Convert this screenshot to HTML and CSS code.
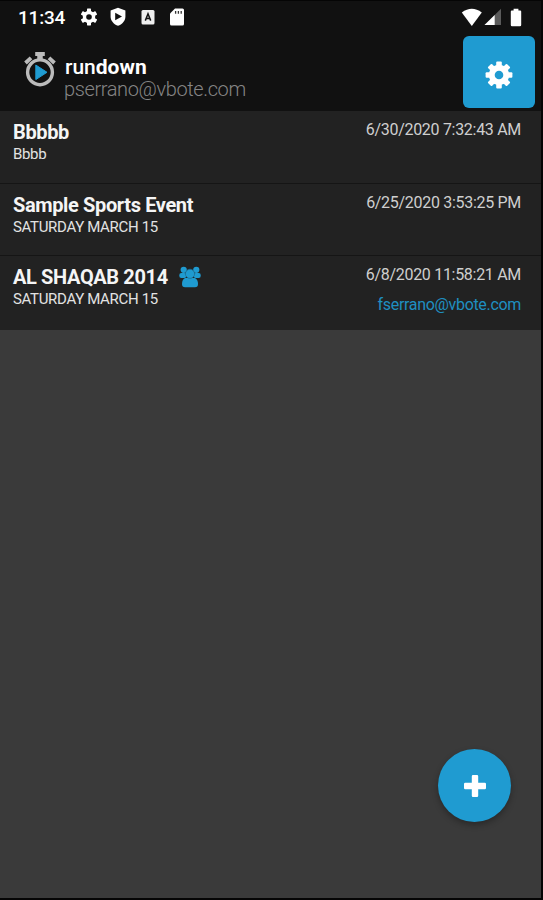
FILE: index.html
```html
<!DOCTYPE html>
<html lang="en">
<head>
<meta charset="utf-8">
<title>rundown</title>
<link rel="stylesheet" href="styles.css">
</head>
<body>
<div class="screen">
  <div class="status">
    <span class="clock">11:34</span>
    <svg class="s-gear" width="18" height="18" viewBox="-9 -9 18 18"><g fill="#fff"><rect x="-2" y="-8.4" width="4" height="16.8" rx=".6"/><rect x="-2" y="-8.4" width="4" height="16.8" rx=".6" transform="rotate(60)"/><rect x="-2" y="-8.4" width="4" height="16.8" rx=".6" transform="rotate(120)"/></g><circle r="4.5" fill="none" stroke="#fff" stroke-width="3.4"/><circle r="2.8" fill="#111"/></svg>
    <svg class="s-shield" width="18" height="20" viewBox="0 0 18 20"><path fill="#fff" d="M9 .8 16.4 3.6V9.5C16.4 14 13 17.5 9 18.8 5 17.5 1.6 14 1.6 9.5V3.6Z"/><path fill="#111" d="M6.2 5.8 13 9.5 6.2 13.2Z"/></svg>
    <svg class="s-a" width="14" height="16" viewBox="0 0 14 16"><rect x=".5" y="1" width="13" height="14.4" rx="1.5" fill="#eee"/><path d="M4.3 11.6 7 4.8 9.7 11.6M5.2 9.6H8.8" fill="none" stroke="#111" stroke-width="1.5"/></svg>
    <svg class="s-sd" width="16" height="18" viewBox="0 0 16 18"><path fill="#fff" d="M6 .5H13.5Q15 .5 15 2V16Q15 17.5 13.5 17.5H2.5Q1 17.5 1 16V5.5Z"/><path stroke="#333" stroke-width="1.3" d="M6.6 3V5.7M9.4 3V5.7M12.2 3V5.7"/></svg>
    <span class="spacer"></span>
    <svg class="s-wifi" width="22" height="19" viewBox="0 0 22 19"><path fill="#fff" d="M.8 4.5Q10.8-3 20.8 4.5L10.8 18Z"/></svg>
    <svg class="s-signal" width="18" height="18" viewBox="0 0 18 18"><path fill="#5b5b5b" d="M17 .8V17H.5Z"/><path fill="#fff" d="M10.7 7V17H.5Z"/></svg>
    <svg class="s-battery" width="12" height="19" viewBox="0 0 12 19"><path fill="#fff" d="M3.6.8H8.4V2.5H10.2Q11.2 2.5 11.2 3.5V17Q11.2 18.2 10 18.2H2Q.8 18.2.8 17V3.5Q.8 2.5 1.8 2.5H3.6Z"/></svg>
  </div>

  <header class="header">
    <svg class="logo" width="34" height="38" viewBox="0 0 34 38"><g fill="none" stroke="#bbb"><circle cx="17" cy="21.3" r="12.4" stroke-width="3.4"/><path d="M12.2 3H21.8" stroke-width="4"/><path d="M17 4V9" stroke-width="5.5"/><path d="M2.5 12 8 6.8M31.5 12 26 6.8" stroke-width="3.8"/></g><path d="M12.8 14 24 21.3 12.8 28.6Z" fill="#1f9bd1" stroke="#1f9bd1" stroke-linejoin="round"/></svg>
    <div class="brand">
      <div class="name">run<b>down</b></div>
      <div class="account">pserrano@vbote.com</div>
    </div>
    <div class="settings">
      <svg width="28" height="28" viewBox="-14 -14 28 28"><g fill="#fff"><rect x="-2.8" y="-13.4" width="5.6" height="26.8" rx="1"/><rect x="-2.8" y="-13.4" width="5.6" height="26.8" rx="1" transform="rotate(45)"/><rect x="-2.8" y="-13.4" width="5.6" height="26.8" rx="1" transform="rotate(90)"/><rect x="-2.8" y="-13.4" width="5.6" height="26.8" rx="1" transform="rotate(135)"/><circle r="10.2"/></g><circle r="4.3" fill="#1f9bd1"/></svg>
    </div>
  </header>

  <main class="list">
    <section class="row">
      <div class="left"><div class="title">Bbbbb</div><div class="sub">Bbbb</div></div>
      <div class="right"><div class="date">6/30/2020 7:32:43 AM</div></div>
    </section>
    <section class="row">
      <div class="left"><div class="title">Sample Sports Event</div><div class="sub">SATURDAY MARCH 15</div></div>
      <div class="right"><div class="date">6/25/2020 3:53:25 PM</div></div>
    </section>
    <section class="row">
      <div class="left"><div class="title"><span>AL SHAQAB 2014</span><svg class="group" width="22" height="22" viewBox="0 0 22 22"><g fill="#1f9bd1"><circle cx="4.7" cy="3.8" r="3.1"/><circle cx="17.3" cy="3.8" r="3.1"/><rect x=".3" y="7" width="7" height="5" rx="2"/><rect x="14.7" y="7" width="7" height="5" rx="2"/><path d="M6 12H16Q19 13.5 19 18Q19 21.2 16 21.2H6Q3 21.2 3 18Q3 13.5 6 12Z"/></g><circle cx="11" cy="7.8" r="4.6" fill="#1f9bd1" stroke="#1c6c90" stroke-width=".7"/></svg></div><div class="sub">SATURDAY MARCH 15</div></div>
      <div class="right"><div class="date">6/8/2020 11:58:21 AM</div><div class="owner">fserrano@vbote.com</div></div>
    </section>
  </main>
  <div class="fab"><svg width="24" height="24" viewBox="0 0 24 24"><path fill="#fff" d="M10 1H14Q15.2 1 15.2 2.2V8.8H21.8Q23 8.8 23 10V14Q23 15.2 21.8 15.2H15.2V21.8Q15.2 23 14 23H10Q8.8 23 8.8 21.8V15.2H2.2Q1 15.2 1 14V10Q1 8.8 2.2 8.8H8.8V2.2Q8.8 1 10 1Z"/></svg></div>
</div>
</body>
</html>
```
FILE: styles.css
```css
* { box-sizing: border-box; }
body { margin: 0; background: #050505; font-family: Roboto, "Liberation Sans", sans-serif; }
.screen { position: relative; width: 541px; height: 898px; background: #3a3a3a; white-space: nowrap; overflow: hidden; }
.status { display: flex; align-items: center; height: 36px; padding: 0 19px 3px; background: #111; border-top: 1px solid #050505; }
.status svg { flex: none; }
.clock { width: 61px; margin-left: -1px; margin-right: 1px; color: #fff; font-size: 19px; font-weight: 500; line-height: 33px; letter-spacing: -.2px; }
.s-shield { margin-left: 11px; }
.s-a { margin-left: 14px; }
.s-sd { margin-left: 14px; }
.spacer { flex: 1; }
.s-signal { margin-left: 1px; }
.s-battery { margin-left: 8px; }
.header { display: flex; height: 75px; padding: 0 6px 0 23px; background: #111; }
.logo { flex: none; margin-top: 15px; }
.brand { flex: 1; padding: 19px 0 0 8px; }
.name { color: #fff; font-size: 21px; font-weight: 500; line-height: 24px; }
.name b { font-weight: 700; }
.account { margin-left: -1px; color: #858585; font-size: 20px; font-weight: 300; line-height: 21px; letter-spacing: -.38px; }
.settings { display: flex; align-items: center; justify-content: center; width: 72px; height: 72px; border-radius: 6px; background: #1f9bd1; padding-top: 6px; }
.list { display: grid; grid-template-rows: 73px 72px 74px; }
.row { display: flex; justify-content: space-between; padding: 8px 20px 0 13px; background: #222; border-bottom: 1px solid #151515; }
.row:last-child { border-bottom-color: #222; }
.title { display: flex; align-items: center; height: 25px; color: #f5f5f5; font-size: 20px; font-weight: 700; letter-spacing: -.37px; }
.sub { height: 20px; color: #e2e2e2; font-size: 15px; line-height: 20px; letter-spacing: -.33px; }
.date { height: 22px; color: #cfcfcf; font-size: 16px; line-height: 22px; letter-spacing: -.3px; }
.right { text-align: right; }
.owner { margin-top: 8px; color: #1f8fc0; font-size: 16px; line-height: 22px; letter-spacing: -.32px; }
.group { margin-left: 11px; }
.fab { position: absolute; left: 438px; top: 749px; display: flex; align-items: center; justify-content: center; width: 73px; height: 73px; border-radius: 50%; background: #1f9bd1; box-shadow: 0 3px 6px rgba(0,0,0,.3); }
```
